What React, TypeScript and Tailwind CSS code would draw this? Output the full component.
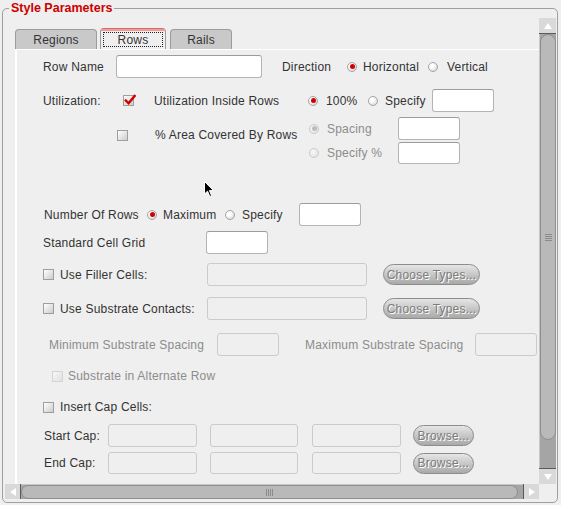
import React from "react";

function Radio({ on = false, dis = false }: { on?: boolean; dis?: boolean }) {
  return (
    <span
      className={`inline-flex h-[10px] w-[10px] shrink-0 items-center justify-center rounded-full border ${
        dis
          ? "border-[#cacaca] bg-[radial-gradient(circle_at_35%_35%,#f4f4f4_20%,#dedede)]"
          : "border-[#a4a4a4] bg-[radial-gradient(circle_at_35%_35%,#ffffff_25%,#cdcdcd)]"
      }`}
    >
      {on && <span className={`h-[5px] w-[5px] rounded-full ${dis ? "bg-[#bdbdbd]" : "bg-[#d40000]"}`} />}
    </span>
  );
}

function Check({ on = false, dis = false }: { on?: boolean; dis?: boolean }) {
  return (
    <span
      className={`relative inline-block h-[11px] w-[11px] shrink-0 border ${
        dis
          ? "border-[#d4d4d4] bg-[linear-gradient(135deg,#f6f6f6,#e0e0e0)]"
          : "border-[#9e9e9e] bg-[linear-gradient(135deg,#ffffff,#cccccc)]"
      }`}
    >
      {on && (
        <svg className="absolute left-[0px] top-[-2px]" width="12" height="12" viewBox="0 0 12 12">
          <path d="M1.8 6.5 L4.6 9.3 L10.6 2" stroke="#d40000" strokeWidth="2.4" fill="none" strokeLinecap="square" />
        </svg>
      )}
    </span>
  );
}

function Field({ cls, dis = false }: { cls: string; dis?: boolean }) {
  return (
    <span
      className={`block shrink-0 rounded-[3px] border ${
        dis ? "border-[#cbcbcb] bg-[#efefef]" : "border-[#b4b4b4] border-t-[#9c9c9c] bg-white"
      } ${cls}`}
    />
  );
}

function Btn({ cls, children }: { cls: string; children: React.ReactNode }) {
  return (
    <span
      className={`flex shrink-0 items-center justify-center rounded-full border border-[#8c8c8c] bg-[linear-gradient(#e6e6e6,#c4c4c4_55%,#a9a9a9)] text-[12px] text-[#7c7c7c] [text-shadow:1px_1px_0_#ffffff] ${cls}`}
    >
      {children}
    </span>
  );
}

export default function App() {
  const grey = "text-[#8c8c8c]";
  return (
    <div className="relative h-[505px] w-[561px] overflow-hidden bg-[#efefef] pt-[8px] font-['Liberation_Sans',Arial,sans-serif] text-[12px] leading-none tracking-[0.2px] text-[#333333]">
      <div className="relative ml-[2px] h-[495px] w-[556px] rounded-[5px] border border-[#9f9f9f] pl-[2px] pt-[9px] pb-[3px]">
        <span className="absolute left-[6px] top-[-9px] bg-[#efefef] px-[2px] text-[12.5px] font-bold leading-[16px] tracking-normal text-[#cc0000]">
          Style Parameters
        </span>
        <div className="flex h-[466px]">
          {/* viewport */}
          <div className="h-[466px] w-[534px] overflow-hidden">
            {/* tabs */}
            <div className="ml-[10px] mt-[10px] flex h-[21px] items-end">
              <div className="flex h-[20px] w-[82px] items-center justify-center rounded-t-[4px] border border-b-0 border-[#9c9c9c] bg-[#c9c9c9] pt-[1px]">
                Regions
              </div>
              <div className="ml-[3px] flex h-[21px] w-[66px] flex-col rounded-t-[4px] border border-b-0 border-[#9c9c9c] border-t-[#d86a6a] bg-[#efefef]">
                <div className="h-[2px] bg-[#f09a9a]" />
                <div className="mx-[2px] mt-[1px] flex h-[15px] items-center justify-center border border-dotted border-[#222222]">
                  Rows
                </div>
              </div>
              <div className="ml-[4px] flex h-[20px] w-[62px] items-center justify-center rounded-t-[4px] border border-b-0 border-[#9c9c9c] bg-[#c9c9c9] pt-[1px]">
                Rails
              </div>
            </div>
            {/* panel */}
            <div className="ml-[10px] flex h-[500px] flex-col border-l-2 border-t border-white">
              {/* Row name */}
              <div className="mt-[5px] flex h-[23px] items-center">
                <span className="ml-[26px] w-[73px] shrink-0">Row Name</span>
                <Field cls="h-[23px] w-[146px]" />
                <span className="ml-[20px] w-[65px] shrink-0">Direction</span>
                <Radio on />
                <span className="ml-[6px] w-[65px] shrink-0">Horizontal</span>
                <Radio />
                <span className="ml-[9px] shrink-0">Vertical</span>
              </div>
              {/* Utilization */}
              <div className="mt-[11px] flex h-[23px] items-center">
                <span className="ml-[26px] w-[80px] shrink-0">Utilization:</span>
                <Check on />
                <span className="ml-[20px] w-[154px] shrink-0">Utilization Inside Rows</span>
                <Radio on />
                <span className="ml-[8px] w-[42px] shrink-0">100%</span>
                <Radio />
                <span className="ml-[7px] w-[47px] shrink-0">Specify</span>
                <Field cls="h-[23px] w-[62px]" />
              </div>
              {/* Area */}
              <div className="mt-[5px] flex items-start">
                <div className="ml-[100px] flex h-[36px] items-center">
                  <Check />
                  <span className="ml-[27px] w-[154px] shrink-0">% Area Covered By Rows</span>
                </div>
                <div className="flex flex-col">
                  <div className="flex h-[23px] items-center">
                    <Radio on dis />
                    <span className={`ml-[8px] w-[71px] shrink-0 ${grey}`}>Spacing</span>
                    <Field cls="h-[23px] w-[62px]" />
                  </div>
                  <div className="mt-[2px] flex h-[22px] items-center">
                    <Radio dis />
                    <span className={`ml-[8px] w-[71px] shrink-0 ${grey}`}>Specify %</span>
                    <Field cls="h-[22px] w-[62px]" />
                  </div>
                </div>
              </div>
              {/* Number of rows */}
              <div className="mt-[39px] flex h-[23px] items-center">
                <span className="ml-[27px] w-[103px] shrink-0">Number Of Rows</span>
                <Radio on />
                <span className="ml-[6px] w-[62px] shrink-0">Maximum</span>
                <Radio />
                <span className="ml-[7px] w-[57px] shrink-0">Specify</span>
                <Field cls="h-[23px] w-[62px]" />
              </div>
              {/* Standard cell grid */}
              <div className="mt-[5px] flex h-[23px] items-center">
                <span className="ml-[26px] w-[163px] shrink-0">Standard Cell Grid</span>
                <Field cls="h-[23px] w-[62px]" />
              </div>
              {/* Filler */}
              <div className="mt-[9px] flex h-[23px] items-center">
                <span className="ml-[26px] flex">
                  <Check />
                </span>
                <span className="ml-[6px] w-[147px] shrink-0">Use Filler Cells:</span>
                <Field dis cls="h-[23px] w-[160px]" />
                <Btn cls="ml-[16px] h-[21px] w-[97px]">Choose Types...</Btn>
              </div>
              {/* Substrate */}
              <div className="mt-[11px] flex h-[23px] items-center">
                <span className="ml-[26px] flex">
                  <Check />
                </span>
                <span className="ml-[6px] w-[147px] shrink-0">Use Substrate Contacts:</span>
                <Field dis cls="h-[23px] w-[160px]" />
                <Btn cls="ml-[16px] h-[21px] w-[97px]">Choose Types...</Btn>
              </div>
              {/* Min/Max spacing */}
              <div className="mt-[13px] flex h-[23px] items-center">
                <span className={`ml-[32px] w-[168px] shrink-0 ${grey}`}>Minimum Substrate Spacing</span>
                <Field dis cls="h-[23px] w-[62px]" />
                <span className={`ml-[26px] w-[170px] shrink-0 ${grey}`}>Maximum Substrate Spacing</span>
                <Field dis cls="h-[23px] w-[62px]" />
              </div>
              {/* Alternate row */}
              <div className="mt-[10px] flex h-[20px] items-center">
                <span className="ml-[35px] flex">
                  <Check dis />
                </span>
                <span className={`ml-[5px] shrink-0 ${grey}`}>Substrate in Alternate Row</span>
              </div>
              {/* Insert cap */}
              <div className="mt-[12px] flex h-[18px] items-center">
                <span className="ml-[26px] flex">
                  <Check />
                </span>
                <span className="ml-[6px] shrink-0">Insert Cap Cells:</span>
              </div>
              {/* Start cap */}
              <div className="mt-[8px] flex h-[23px] items-center">
                <span className="ml-[27px] w-[64px] shrink-0">Start Cap:</span>
                <Field dis cls="h-[23px] w-[89px]" />
                <Field dis cls="ml-[13px] h-[23px] w-[88px]" />
                <Field dis cls="ml-[14px] h-[23px] w-[89px]" />
                <Btn cls="ml-[12px] h-[21px] w-[61px]">Browse...</Btn>
              </div>
              {/* End cap */}
              <div className="mt-[5px] flex h-[22px] items-center">
                <span className="ml-[27px] w-[64px] shrink-0">End Cap:</span>
                <Field dis cls="h-[22px] w-[89px]" />
                <Field dis cls="ml-[13px] h-[22px] w-[88px]" />
                <Field dis cls="ml-[14px] h-[22px] w-[89px]" />
                <Btn cls="ml-[12px] h-[21px] w-[61px]">Browse...</Btn>
              </div>
            </div>
          </div>
          {/* vertical scrollbar */}
          <div className="flex h-[466px] w-[17px] flex-col bg-[#a5a5a5]">
            <div className="flex h-[16px] shrink-0 items-center justify-center border-b border-[#5a5a5a] bg-[#d9d9d9]">
              <svg width="8" height="6" viewBox="0 0 8 6">
                <path d="M4 0 L8 6 L0 6 Z" fill="#ffffff" />
              </svg>
            </div>
            <div className="flex flex-1 flex-col border-l border-[#c8c8c8]">
              <div className="flex h-[406px] flex-col items-center justify-center rounded-[8px] border border-[#8e8e8e] bg-[#b9b9b9]">
                <div className="flex flex-col gap-[1px]">
                  <span className="block h-[1px] w-[7px] bg-[#8a8a8a]" />
                  <span className="block h-[1px] w-[7px] bg-[#8a8a8a]" />
                  <span className="block h-[1px] w-[7px] bg-[#8a8a8a]" />
                  <span className="block h-[1px] w-[7px] bg-[#8a8a8a]" />
                </div>
              </div>
            </div>
            <div className="flex h-[16px] shrink-0 items-center justify-center border-t border-[#5a5a5a] bg-[#d9d9d9]">
              <svg width="8" height="6" viewBox="0 0 8 6">
                <path d="M0 0 L8 0 L4 6 Z" fill="#ffffff" />
              </svg>
            </div>
          </div>
        </div>
        {/* horizontal scrollbar */}
        <div className="flex h-[15px] w-[534px] bg-[#a5a5a5]">
          <div className="flex w-[16px] shrink-0 items-center justify-center border-r border-[#5a5a5a] bg-[#d9d9d9]">
            <svg width="6" height="8" viewBox="0 0 6 8">
              <path d="M6 0 L6 8 L0 4 Z" fill="#ffffff" />
            </svg>
          </div>
          <div className="flex flex-1 border-t border-[#c8c8c8]">
            <div className="flex h-[14px] w-[497px] items-center justify-center rounded-full border border-[#8e8e8e] bg-[#b9b9b9]">
              <div className="flex gap-[1px]">
                <span className="block h-[7px] w-[1px] bg-[#8a8a8a]" />
                <span className="block h-[7px] w-[1px] bg-[#8a8a8a]" />
                <span className="block h-[7px] w-[1px] bg-[#8a8a8a]" />
                <span className="block h-[7px] w-[1px] bg-[#8a8a8a]" />
              </div>
            </div>
          </div>
          <div className="flex w-[16px] shrink-0 items-center justify-center border-l border-[#5a5a5a] bg-[#d9d9d9]">
            <svg width="6" height="8" viewBox="0 0 6 8">
              <path d="M0 0 L6 4 L0 8 Z" fill="#ffffff" />
            </svg>
          </div>
        </div>
      </div>
      {/* mouse cursor */}
      <svg className="absolute left-[204px] top-[181px]" width="11" height="17" viewBox="0 0 11 17">
        <path d="M0.5 0.5 L0.5 13 L3.5 10.2 L5.8 15.5 L7.6 14.7 L5.4 9.6 L9.5 9.6 Z" fill="#000000" stroke="#ffffff" strokeWidth="1" />
      </svg>
    </div>
  );
}
